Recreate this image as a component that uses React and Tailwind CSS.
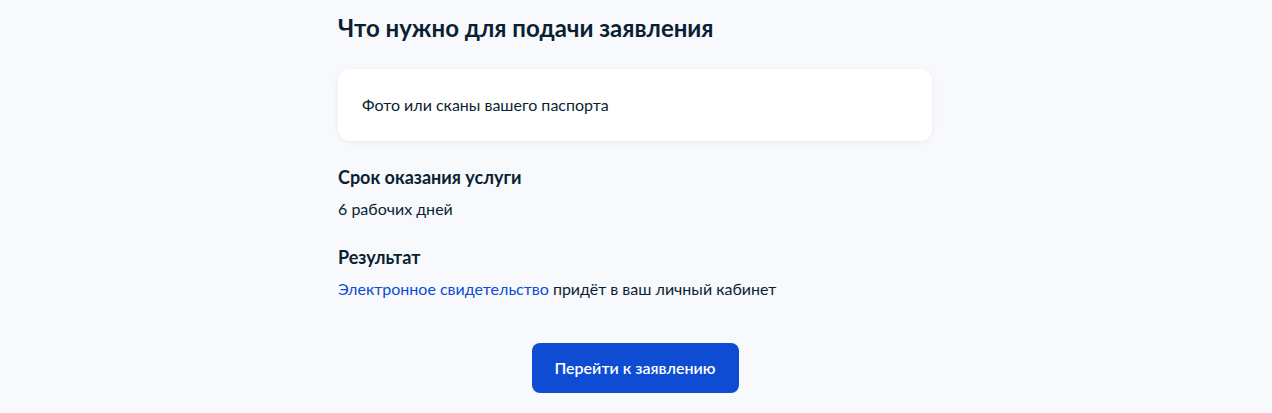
export default function App() {
  return (
    <div className="min-h-[413px] w-full bg-[#f7f9fc] text-[#0b1f33]" style={{ fontFamily: "Lato, 'Noto Sans', sans-serif" }}>
      <div className="ml-[338px] w-[594px] pt-[12px]">
        <h2 className="text-[24px] font-bold leading-[32px]">Что нужно для подачи заявления</h2>
        <div className="mt-[25px] rounded-[12px] bg-white px-[24px] py-[24px] shadow-[0_1px_6px_rgba(11,31,51,0.06)]">
          <p className="text-[16px] leading-[24px]">Фото или сканы вашего паспорта</p>
        </div>
        <div className="mt-[24px]">
          <h3 className="text-[18px] font-bold leading-[24px]">Срок оказания услуги</h3>
          <p className="mt-[8px] text-[16px] leading-[24px]">6 рабочих дней</p>
        </div>
        <div className="mt-[24px]">
          <h3 className="text-[18px] font-bold leading-[24px]">Результат</h3>
          <p className="mt-[8px] text-[16px] leading-[24px]">
            <a className="text-[#0d4cd3]">Электронное свидетельство</a> придёт в ваш личный кабинет
          </p>
        </div>
        <div className="mt-[42px] flex justify-center">
          <button className="h-[50px] w-[207px] rounded-[8px] bg-[#0d4cd3] text-[16px] font-semibold text-white">
            Перейти к заявлению
          </button>
        </div>
      </div>
    </div>
  );
}
